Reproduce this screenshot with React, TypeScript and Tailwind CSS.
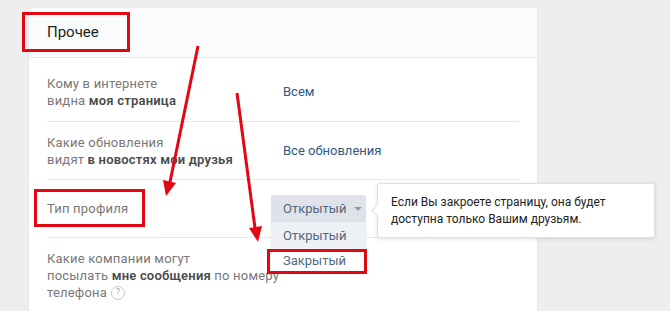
import React from "react";

const Row = ({
  label,
  value,
  last = false,
  className = "",
}: {
  label: React.ReactNode;
  value?: React.ReactNode;
  last?: boolean;
  className?: string;
}) => {
  return (
    <div className={`flex items-center ${last ? "" : "border-b border-[#e7e8ec]"} ${className}`}>
      <div className="w-[236px] shrink-0 text-[13px] tracking-[0.2px] leading-[17px] text-[#787878]">{label}</div>
      <div className="text-[13px] text-[#2f5a86]">{value}</div>
    </div>
  );
};

const Arrows = () => (
  <svg className="absolute inset-0 pointer-events-none" width="670" height="311" viewBox="0 0 670 311">
    <line x1="198" y1="46" x2="170" y2="182" stroke="#e30613" strokeWidth="3" />
    <polygon points="166,196 163,180 176,183" fill="#e30613" />
    <line x1="237" y1="93" x2="255" y2="228" stroke="#e30613" strokeWidth="3" />
    <polygon points="258,242 249,228 262,226" fill="#e30613" />
  </svg>
);

const App = () => {
  return (
    <div className="relative w-[670px] h-[311px] overflow-hidden bg-[#edeef0] font-['Roboto','Liberation_Sans',sans-serif]">
      <div className="ml-[29px] mt-[8px] w-[508px] h-[320px] bg-white rounded-t-[4px] shadow-[0_1px_0_0_#dce1e6,0_0_0_1px_#e7e8ec]">
        <div className="h-[50px] flex items-center pl-[18px] bg-[#fafbfc] border-b border-[#e7e8ec] rounded-t-[4px] text-[15px] text-[#222]">
          Прочее
        </div>
        <div className="px-[18px]">
          <Row
            className="h-[64px] pt-[4px]"
            label={
              <>
                Кому в интернете
                <br />
                видна <b className="font-semibold text-[#4a4a4a]">моя страница</b>
              </>
            }
            value="Всем"
          />
          <Row
            className="h-[58px]"
            label={
              <>
                Какие обновления
                <br />
                видят <b className="font-semibold text-[#4a4a4a]">в новостях мои друзья</b>
              </>
            }
            value="Все обновления"
          />
          <Row
            className="h-[58px]"
            label="Тип профиля"
            value={
              <div className="relative">
                <div className="flex items-center gap-[8px] h-[27px] w-[95px] pl-[12px] -ml-[12px] bg-[#dfe3e9] text-[#55677d] rounded-t-[2px]">
                  Открытый
                  <span className="w-0 h-0 border-x-[4px] border-x-transparent border-t-[4px] border-t-[#8b9bb0]" />
                </div>
                <div className="absolute left-[-12px] top-[27px] w-[95px] bg-[#edf0f5] text-[#55677d] shadow-[0_1px_2px_rgba(0,0,0,0.12)]">
                  <div className="h-[27px] flex items-center pl-[12px]">Открытый</div>
                  <div className="h-[23px] flex items-center pl-[12px] bg-white">Закрытый</div>
                </div>
              </div>
            }
          />
          <Row
            last
            className="pt-[12px]"
            label={
              <>
                Какие компании могут
                <br />
                посылать <b className="font-semibold text-[#4a4a4a]">мне сообщения</b> по номеру
                <br />
                <span className="inline-flex items-center gap-[4px]">
                  телефона
                  <span className="inline-flex items-center justify-center w-[14px] h-[14px] rounded-full border border-[#c5cbd2] text-[9px] text-[#a0a8b2]">
                    ?
                  </span>
                </span>
              </>
            }
          />
        </div>
      </div>

      {/* tooltip */}
      <div className="absolute left-[377px] top-[183px] w-[278px] h-[55px] bg-white border border-[#dce1e6] rounded-[2px] shadow-[0_1px_4px_rgba(0,0,0,0.12)] pl-[13px] pt-[10px] text-[12px] leading-[17px] text-[#222]">
        <span className="absolute -left-[5px] top-[22px] w-[9px] h-[9px] rotate-45 bg-white border-l border-b border-[#dce1e6]" />
        Если Вы закроете страницу, она будет
        <br />
        доступна только Вашим друзьям.
      </div>

      {/* annotation boxes */}
      <div className="absolute left-[22px] top-[12px] w-[108px] h-[40px] border-[3px] border-[#e30613]" />
      <div className="absolute left-[34px] top-[189px] w-[111px] h-[38px] border-[3px] border-[#e30613]" />
      <div className="absolute left-[267px] top-[249px] w-[100px] h-[25px] border-[3px] border-[#e30613]" />
      <Arrows />
    </div>
  );
};

export default App;
